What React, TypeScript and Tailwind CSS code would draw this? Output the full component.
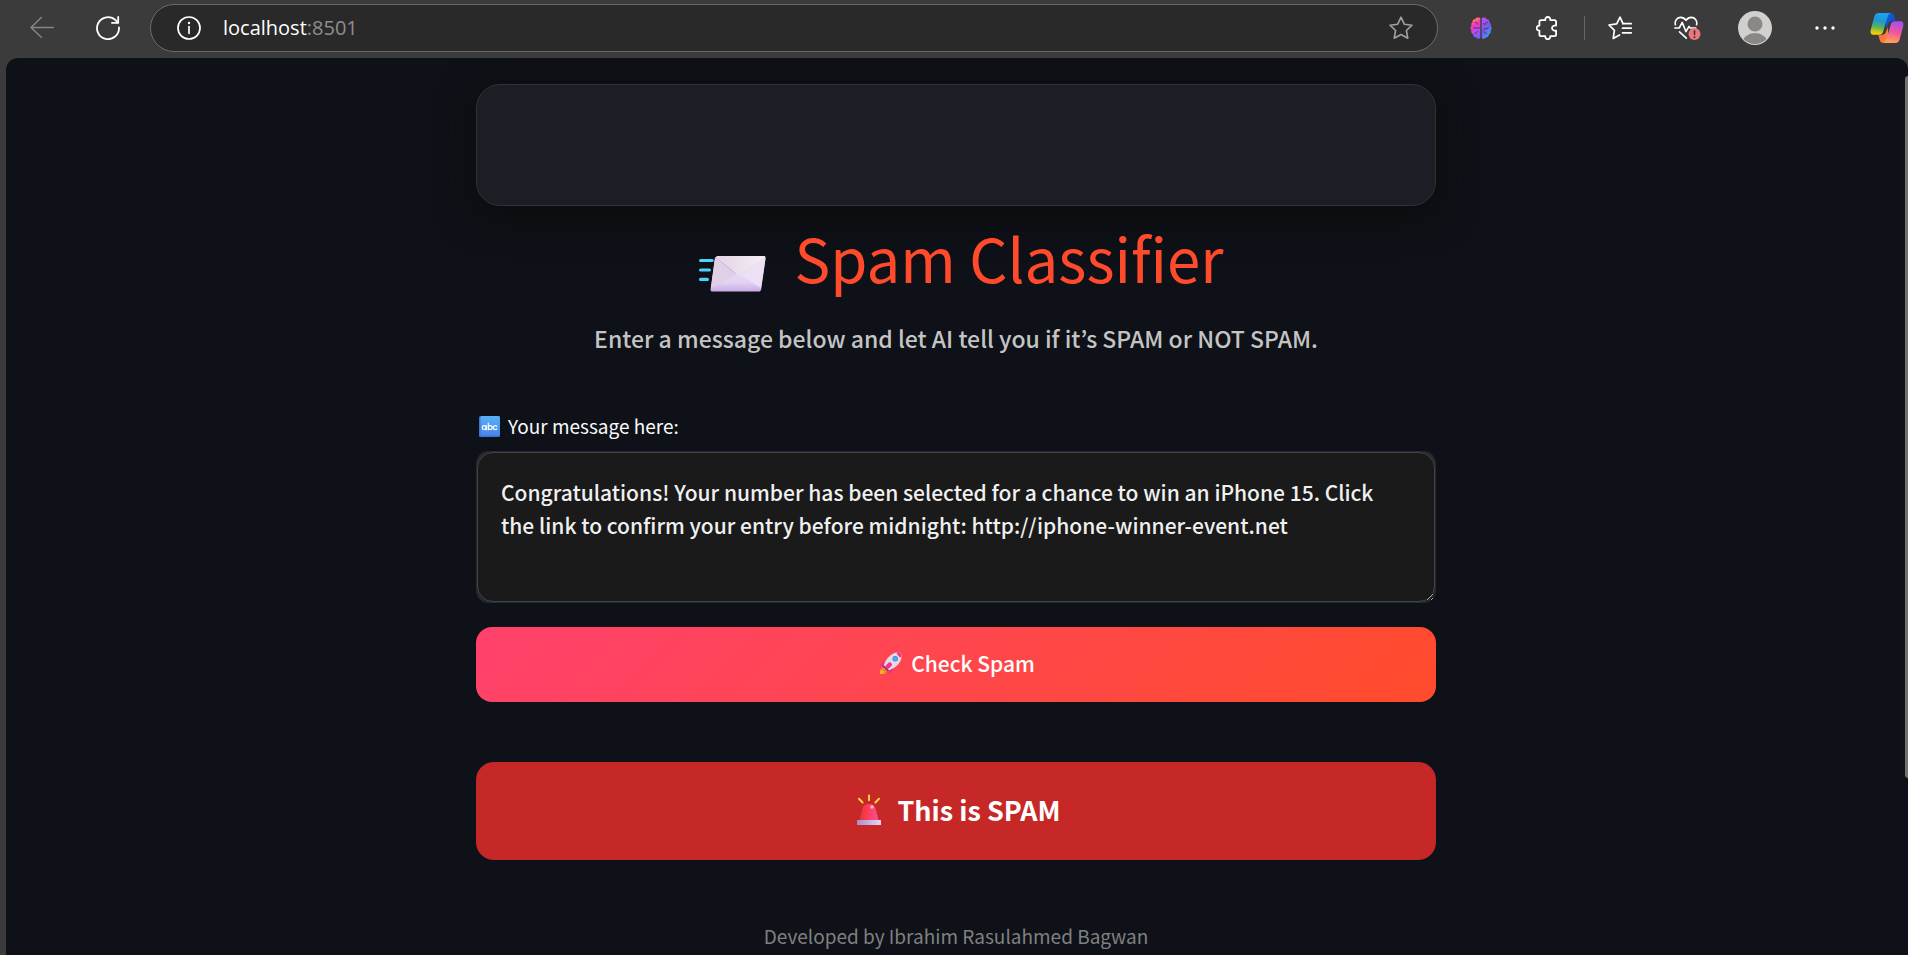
import React from "react";

const sans = "font-['Noto_Sans_CJK_KR',sans-serif]";

function BackIcon() {
  return (
    <svg className="size-6" viewBox="0 0 24 24" fill="none" stroke="currentColor" strokeWidth="1.5" strokeLinecap="round" strokeLinejoin="round">
      <path d="M23.3 11.5H1M11.3 1.5 1 11.5l10.3 9.7" />
    </svg>
  );
}

function ReloadIcon() {
  return (
    <svg className="size-6" viewBox="0 0 24 24" fill="none" stroke="currentColor" strokeWidth="1.8" strokeLinecap="round" strokeLinejoin="round">
      <path d="M23 11.5A11 11 0 1 1 19.6 4.2L22 6.6" />
      <path d="M22.2.9v5.9h-6.3" />
    </svg>
  );
}

function InfoIcon() {
  return (
    <svg className="size-6" viewBox="0 0 24 24" fill="none" stroke="currentColor" strokeWidth="1.7" strokeLinecap="round">
      <circle cx="12" cy="12" r="11" />
      <path d="M12 10.5v6.8" />
      <circle cx="12" cy="7" r="1.2" fill="currentColor" stroke="none" />
    </svg>
  );
}

function StarIcon() {
  return (
    <svg className="size-6" viewBox="0 0 24 24" fill="none" stroke="currentColor" strokeWidth="1.6" strokeLinejoin="round">
      <path d="M12 1.2l3.3 7 7.7 1-5.6 5.3 1.4 7.7L12 18.5l-6.8 3.7 1.4-7.7L1 9.2l7.7-1z" />
    </svg>
  );
}

function BrainIcon() {
  return (
    <svg className="h-[22px] w-[22px]" viewBox="0 0 22 22">
      <defs>
        <linearGradient id="brain-l" x1="0.4" y1="0" x2="0.7" y2="1">
          <stop offset="0" stopColor="#ffa030" />
          <stop offset="0.3" stopColor="#fb36c0" />
          <stop offset="0.65" stopColor="#b94cf0" />
          <stop offset="1" stopColor="#6a63f5" />
        </linearGradient>
        <linearGradient id="brain-r" x1="0.2" y1="0" x2="0.8" y2="1">
          <stop offset="0" stopColor="#c04be8" />
          <stop offset="0.5" stopColor="#6f5cf2" />
          <stop offset="1" stopColor="#35b4ff" />
        </linearGradient>
      </defs>
      <path fill="url(#brain-l)" d="M10.3 1.6C9.6.2 6.400.1 5.500 1.900 3.600 1.900 2.200 3.400 2.600 5.200 1.200 6.100.9 7.500 1.500 8.800.1 9.900-.1 12.200 1.400 13.300.9 15.100 1.600 16.600 3.100 17.200c0 1.900 1.300 3.200 3.200 3.200 1 1.900 3.500 1.700 4-.2z" />
      <path fill="url(#brain-r)" d="M11.700 1.600c.7-1.400 3.900-1.500 4.800.3 1.900 0 3.300 1.500 2.900 3.300 1.400.9 1.700 2.300 1.100 3.600 1.400 1.100 1.600 3.400.1 4.500.5 1.800-.2 3.300-1.700 3.900 0 1.900-1.300 3.200-3.200 3.200-1 1.900-3.500 1.700-4-.2z" />
      <g stroke="#3b3b3b" strokeWidth="0.9" fill="none" strokeLinecap="round">
        <path d="M3.500 11h6.300M5 5.500c1.500-.3 2.500.3 2.700 1.600M4.800 16c1.200.4 2.400-.2 2.700-1.500M17.500 5.500c-1.300 0-2.300.8-2.400 2.100l-1.600-1M19 10.500c-1 1.500-3 1.700-4.200.8L13.500 13M16.500 17c-.3-1.300-1.200-2.100-2.500-2" />
      </g>
    </svg>
  );
}

function PuzzleIcon() {
  return (
    <svg className="size-6" viewBox="0 0 24 24" fill="none" stroke="currentColor" strokeWidth="1.8" strokeLinejoin="round">
      <path d="M5 4.200h4.300c-.2-2 .8-3.200 2.500-3.200s2.700 1.200 2.500 3.200h4.200c1 0 1.600.6 1.600 1.600v3.700c-2-.2-4.100.6-4.100 2.600s2.100 2.800 4.100 2.600v3.900c0 1-.6 1.600-1.600 1.600h-4.200c.1 1.900-.9 3-2.500 3s-2.600-1.100-2.500-3H5c-1 0-1.600-.6-1.600-1.600v-4c-1.700 0-2.700-1-2.700-2.500s1-2.500 2.700-2.500V5.800c0-1 .6-1.600 1.600-1.600z" />
    </svg>
  );
}

function FavoritesIcon() {
  return (
    <svg className="size-6" viewBox="0 0 24 24" fill="none" stroke="currentColor" strokeWidth="1.7" strokeLinecap="round" strokeLinejoin="round">
      <path d="M15 7.600L12 1.200 8.700 7.800 1 9l5.400 5.400-1.200 8 6.300-3.400" />
      <path d="M15 7.700h8.300M14.500 12.200h8.800M14.500 16.800h8.800" />
    </svg>
  );
}

function HealthIcon() {
  return (
    <svg className="h-6 w-7" viewBox="0 0 28 24" fill="none" strokeLinecap="round" strokeLinejoin="round">
      <g stroke="#fff" strokeWidth="1.600">
        <path d="M1.400 8.800C.4 4.500 3.300 1.400 6.700 1.400c2.200 0 4 1.200 5.300 3 1.300-1.800 3.100-3 5.300-3 3.400 0 6.300 3.100 5.300 7.400" />
        <path d="M.8 12h4.400l3-5.600 3.800 9.200 3-5.200 1.200 1.600h5.600M5.500 15.800l6.800 6.400" />
      </g>
      <circle cx="20.500" cy="18" r="6" fill="#e87a7e" />
      <path d="M20.500 14.700v3.800" stroke="#5a2426" strokeWidth="1.600" />
      <circle cx="20.500" cy="21.200" r="1" fill="#5a2426" />
    </svg>
  );
}

function AvatarIcon() {
  return (
    <svg className="h-[34px] w-[34px]" viewBox="0 0 34 34">
      <clipPath id="avatar-clip">
        <circle cx="17" cy="17" r="16" />
      </clipPath>
      <circle cx="17" cy="17" r="17" fill="#d2d0ce" />
      <g clipPath="url(#avatar-clip)" fill="#8a8886">
        <circle cx="17" cy="13" r="7.500" />
        <ellipse cx="17" cy="32" rx="12.500" ry="10" />
      </g>
    </svg>
  );
}

function DotsIcon() {
  return (
    <svg className="h-5 w-5" viewBox="0 0 20 20" fill="currentColor">
      <circle cx="2" cy="10" r="1.700" />
      <circle cx="10" cy="10" r="1.700" />
      <circle cx="18" cy="10" r="1.700" />
    </svg>
  );
}

function CopilotIcon() {
  return (
    <svg className="h-[34px] w-[34px]" viewBox="0 0 34 34">
      <defs>
        <linearGradient id="cp-a" x1="0.500" y1="0" x2="0.350" y2="1">
          <stop offset="0" stopColor="#1aa5f0" />
          <stop offset="0.350" stopColor="#2196d6" />
          <stop offset="0.650" stopColor="#52b45a" />
          <stop offset="0.950" stopColor="#f5d000" />
        </linearGradient>
        <linearGradient id="cp-b" x1="0.600" y1="0" x2="0.400" y2="1">
          <stop offset="0" stopColor="#a44ef0" />
          <stop offset="0.500" stopColor="#f2569a" />
          <stop offset="1" stopColor="#ffa552" />
        </linearGradient>
        <linearGradient id="cp-c" x1="0" y1="0" x2="1" y2="1">
          <stop offset="0" stopColor="#0f6be0" />
          <stop offset="1" stopColor="#1236b8" />
        </linearGradient>
        <linearGradient id="cp-d" x1="0" y1="0" x2="1" y2="1">
          <stop offset="0" stopColor="#f4603c" />
          <stop offset="1" stopColor="#ff8a3c" />
        </linearGradient>
      </defs>
      <path fill="url(#cp-c)" d="M16 2h4.500c2 0 3.200 1 3.800 3l1.500 5.300h-4c-2 0-3 1-3.600 3L16 18z" />
      <path fill="url(#cp-d)" d="M18 32h-4.500c-2 0-3.200-1-3.800-3L8.300 23.700h4c2 0 3-1 3.600-3L18 16z" />
      <path fill="url(#cp-a)" d="M8.500 2H21c-1.800.3-2.700 1.500-3.300 3.500l-4.500 15c-.7 2.200-2 3.200-4.200 3.200H4c-3 0-4-2-3.200-5L4.200 6c.8-2.700 2-4 4.300-4z" />
      <path fill="url(#cp-b)" d="M25.500 32H13c1.800-.3 2.700-1.500 3.300-3.500l4.500-15c.7-2.200 2-3.200 4.200-3.200h5c3 0 4 2 3.200 5L29.800 28c-.8 2.700-2 4-4.300 4z" />
    </svg>
  );
}

function EnvelopeIcon() {
  return (
    <svg className="h-10 w-[84px]" viewBox="0 0 84 40" aria-hidden="true">
      <defs>
        <linearGradient id="env-body" x1="0" y1="0" x2="0" y2="1">
          <stop offset="0" stopColor="#ece3f3" />
          <stop offset="0.750" stopColor="#e2d2f3" />
          <stop offset="1" stopColor="#c9aae6" />
        </linearGradient>
        <linearGradient id="env-flap" x1="0" y1="0" x2="1" y2="0">
          <stop offset="0" stopColor="#e3d6e6" />
          <stop offset="1" stopColor="#f3edf6" />
        </linearGradient>
      </defs>
      <g stroke="#4fd2fb" strokeWidth="3.200" strokeLinecap="round">
        <path d="M12.600 7.500h11.500M12.600 17h8.800M12.600 26.400h6.800" />
      </g>
      <path fill="url(#env-body)" d="M30.500 3h45c1.600 0 2.300 1 2 2.500l-4.300 30.700c-.3 1.500-1.200 2.300-2.800 2.300H24.600c-1.600 0-2.300-1-2-2.500L26.900 5.500C27.200 3.900 28.600 3 30.500 3z" />
      <path fill="#dfd0e6" d="M27 5l21 16.500L23 35z" />
      <path fill="#ebe0f4" d="M77.500 5.500L52 21.500 73 35z" />
      <path fill="url(#env-flap)" d="M28.500 3.400C29 3.100 29.700 3 30.500 3h45c.9 0 1.500.3 1.800.9L53.500 20.300c-2.200 1.500-4.300 1.500-6.200 0z" />
      <path d="M27.500 4.500L47.300 20.300" stroke="#c6addb" strokeWidth="1" />
    </svg>
  );
}

function AbcIcon() {
  return (
    <svg className="h-[21px] w-[21px]" viewBox="0 0 21 21" aria-hidden="true">
      <defs>
        <linearGradient id="abc-bg" x1="0" y1="0" x2="0" y2="1">
          <stop offset="0" stopColor="#58b0f8" />
          <stop offset="1" stopColor="#4688ea" />
        </linearGradient>
      </defs>
      <rect width="21" height="21" rx="1.500" fill="#3f74dc" />
      <rect x="1.500" width="19.500" height="19.500" rx="1.500" fill="url(#abc-bg)" />
      <g fill="none" stroke="#fff" strokeWidth="1.200" strokeLinecap="round">
        <circle cx="5.200" cy="11.600" r="1.900" />
        <path d="M7.300 9.700v4M9.300 7v6.700M17.800 10.300a2 2 0 1 0 0 2.600" />
        <circle cx="11.300" cy="11.600" r="1.900" />
      </g>
    </svg>
  );
}

function RocketIcon() {
  return (
    <svg className="size-6" viewBox="0 0 24 24" aria-hidden="true">
      <path fill="#f8842c" d="M1 18.500c1.500-2 4-2.200 5.500-.8s1.300 3.800-.6 5.300H.8z" />
      <path fill="#ffb02e" d="M1 20c1-1 2.300-1 3.200-.2.800.9.700 2-.2 3.200H1z" />
      <path fill="#e8308a" d="M8.500 9.500c-3.500.3-5.700 2-7.800 5.300l5.300.4zM14.500 15.500c-.3 3.500-1 5.200-3.600 7.500l-1.700-4.500z" />
      <path fill="#e3dbea" d="M22.500 1.500c.8 5.300-.7 9.700-4.500 13-2.300 2-4.800 3.500-8.200 4.800l-5-5c1.200-3.500 2.700-6 4.900-8.200 3.300-3.700 7.600-5.300 12.800-4.600z" />
      <path fill="#f03f6a" d="M17.500 1.500c1.700-.4 3.400-.4 5-.1.300 1.700.2 3.500-.3 5.200-2.400-.5-4.100-2.500-4.700-5.100z" />
      <path fill="#f03f6a" d="M22 .5l1.500-.3-.3 1.600-1 .5z" />
      <path fill="#f2357f" d="M10.500 11.500c-1.200 1-3.800 4.500-4.700 6.700l1.400 1c2.200-1.300 4.400-3.700 5.500-5.500z" />
      <path fill="#503a78" d="M4.600 14.200l5.200 5.200-1.300.4-4.300-4.300z" />
      <path fill="#f2357f" d="M11 11c-1.700.8-4 3-5 5l2.200 2.200c2-1 4.300-3.200 5-5z" />
      <circle cx="16.200" cy="7.800" r="2.700" fill="#3f7fc0" />
      <circle cx="16.200" cy="7.800" r="2.100" fill="#58a8f2" />
    </svg>
  );
}

function SirenIcon() {
  return (
    <svg className="h-8 w-6" viewBox="0 0 24 32" aria-hidden="true">
      <defs>
        <linearGradient id="siren-dome" x1="0" y1="0" x2="1" y2="0">
          <stop offset="0" stopColor="#d93a3a" />
          <stop offset="0.400" stopColor="#ff3b52" />
          <stop offset="1" stopColor="#f6509c" />
        </linearGradient>
        <linearGradient id="siren-base" x1="0" y1="0" x2="1" y2="0">
          <stop offset="0" stopColor="#a78fc6" />
          <stop offset="1" stopColor="#e2d6f6" />
        </linearGradient>
      </defs>
      <g stroke="#fbd23c" strokeWidth="2" strokeLinecap="round">
        <path d="M12 1.500v4.700M2 4.800l3.600 3.700M22 4.800l-3.600 3.700" />
      </g>
      <path fill="url(#siren-dome)" d="M12 10c3.500 0 5.800 1.500 6.500 4.500L21.500 26h-19l3-11.500C6.200 11.500 8.500 10 12 10z" />
      <circle cx="15" cy="13" r="1.700" fill="#ffb3cc" />
      <rect x="0" y="26" width="24" height="5" rx="0.600" fill="url(#siren-base)" />
    </svg>
  );
}

function BrowserBar() {
  return (
    <header className="flex h-[58px] shrink-0 items-center pr-1 pb-[2px] pl-[30px] text-white">
      <button type="button" aria-label="Back" className="text-[#858585]"><BackIcon /></button>
      <button type="button" aria-label="Refresh" className="ml-[42px]"><ReloadIcon /></button>
      <div className="ml-[30px] flex h-12 min-w-0 flex-1 items-center rounded-full border border-[#6a6a6a] bg-[#292929] pr-6 pl-[26px]">
        <button type="button" aria-label="View site information"><InfoIcon /></button>
        <span className="ml-[22px] font-['Open_Sans',sans-serif] text-[20px] leading-6">
          localhost<span className="text-[#8e8e8e]">:8501</span>
        </span>
        <button type="button" aria-label="Add this page to favorites" className="ml-auto text-[#a0a0a0]"><StarIcon /></button>
      </div>
      <button type="button" aria-label="Brain extension" className="ml-8"><BrainIcon /></button>
      <button type="button" aria-label="Extensions" className="ml-11"><PuzzleIcon /></button>
      <div className="ml-6 h-6 w-px bg-[#666666]" />
      <button type="button" aria-label="Favorites" className="ml-[23px]"><FavoritesIcon /></button>
      <button type="button" aria-label="Browser essentials" className="ml-[42px]"><HealthIcon /></button>
      <button type="button" aria-label="Profile" className="ml-9"><AvatarIcon /></button>
      <button type="button" aria-label="Settings and more" className="ml-[43px]"><DotsIcon /></button>
      <button type="button" aria-label="Copilot" className="ml-[35px]"><CopilotIcon /></button>
    </header>
  );
}

export default function App() {
  return (
    <div className={`flex min-h-screen flex-col bg-[#3b3b3b] pl-[6px] ${sans}`}>
      <div className="-ml-[6px]"><BrowserBar /></div>
      <main className="relative flex-1 overflow-hidden rounded-t-xl bg-[#0e1117] pr-[2px]">
        <div className="mx-auto flex max-w-[960px] flex-col pt-[26px]">
          <div className="h-[122px] rounded-3xl border border-[#303236] bg-[#1b1e25] shadow-[0_8px_40px_#0c0c0c]" />
          <h1 className="mt-[15px] flex items-center justify-center gap-[22px] text-[60px] leading-[72px] font-normal text-[#ff4b2b]">
            <span className="pt-8"><EnvelopeIcon /></span>
            Spam Classifier
          </h1>
          <p className="mt-[27px] text-center text-[23px] leading-9 font-medium text-[#c4c4c4]">
            Enter a message below and let AI tell you if it’s SPAM or NOT SPAM.
          </p>
          <label htmlFor="message" className="mt-[58px] flex items-center gap-2 pl-[3px] text-[19px] leading-6 text-[#fafafa]">
            <AbcIcon />
            Your message here:
          </label>
          <div className="mt-[13px] flex rounded-xl border border-[#262730] bg-[#262730]">
            <textarea
              id="message"
              spellCheck={false}
              className="h-[150px] w-full resize-y rounded-2xl border border-[#444444] bg-[#1a1a1a] p-[23px] text-[21px] leading-[33px] font-medium text-[#f0f0f0] outline-none"
              defaultValue="Congratulations! Your number has been selected for a chance to win an iPhone 15. Click the link to confirm your entry before midnight: http://iphone-winner-event.net"
            />
          </div>
          <button
            type="button"
            className="mt-6 flex h-[75px] items-center justify-center gap-2 rounded-2xl bg-[linear-gradient(135deg,#ff416c,#ff4b2b)] pb-1 pl-[2px] text-[21px] leading-8 font-medium text-white"
          >
            <RocketIcon />
            Check Spam
          </button>
          <div role="status" className="mt-[60px] flex h-[98px] items-center justify-center gap-4 rounded-[18px] bg-[#c62828] pb-[2px] pl-[6px] text-[27px] leading-10 font-bold text-white">
            <SirenIcon />
            This is SPAM
          </div>
          <footer className="mt-16 text-center text-[19px] leading-6 text-[#808080]">
            Developed by Ibrahim Rasulahmed Bagwan
          </footer>
        </div>
        <div className="absolute top-[18px] right-0 h-[702px] w-[3px] rounded-l-full bg-[#6f6f6f]" />
      </main>
    </div>
  );
}
